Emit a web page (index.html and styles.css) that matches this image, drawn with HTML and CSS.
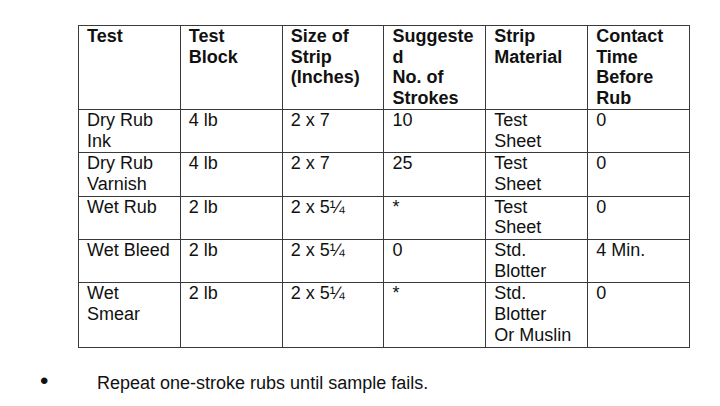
FILE: index.html
```html
<!DOCTYPE html>
<html>
<head>
<meta charset="utf-8">
<link rel="stylesheet" href="styles.css">
</head>
<body>
<div class="page">
<table class="grid">
<thead>
<tr>
<th>Test</th>
<th>Test<br>Block</th>
<th>Size of<br>Strip<br>(Inches)</th>
<th>Suggeste<br>d<br>No. of<br>Strokes</th>
<th>Strip<br>Material</th>
<th>Contact<br>Time<br>Before<br>Rub</th>
</tr>
</thead>
<tbody>
<tr>
<td>Dry Rub<br>Ink</td>
<td>4 lb</td>
<td>2 x 7</td>
<td>10</td>
<td>Test<br>Sheet</td>
<td>0</td>
</tr>
<tr>
<td>Dry Rub<br>Varnish</td>
<td>4 lb</td>
<td>2 x 7</td>
<td>25</td>
<td>Test<br>Sheet</td>
<td>0</td>
</tr>
<tr>
<td>Wet Rub</td>
<td>2 lb</td>
<td>2 x 5¼</td>
<td>*</td>
<td>Test<br>Sheet</td>
<td>0</td>
</tr>
<tr>
<td>Wet Bleed</td>
<td>2 lb</td>
<td>2 x 5¼</td>
<td>0</td>
<td>Std.<br>Blotter</td>
<td>4 Min.</td>
</tr>
<tr>
<td>Wet<br>Smear</td>
<td>2 lb</td>
<td>2 x 5¼</td>
<td>*</td>
<td>Std.<br>Blotter<br>Or Muslin</td>
<td>0</td>
</tr>
</tbody>
</table>
<div class="note">
<span class="dot">•</span>
<span class="note-text">Repeat one-stroke rubs until sample fails.</span>
</div>
</div>
</body>
</html>
```
FILE: styles.css
```css
html, body {
  margin: 0;
  padding: 0;
  background: #ffffff;
}
body {
  font-family: "Liberation Sans", Arial, sans-serif;
  font-size: 18px;
  color: #111111;
}
.page {
  padding: 25px 0 0 78px;
}
.grid {
  border-collapse: collapse;
  table-layout: fixed;
  width: 612px;
}
.grid th,
.grid td {
  border: 1px solid #3a3a3a;
  padding: 0 6px 0 8px;
  vertical-align: top;
  text-align: left;
  line-height: 20.7px;
}
.grid th {
  font-weight: bold;
}
.grid td {
  font-weight: normal;
  padding-bottom: 1px;
}
.note {
  display: flex;
  align-items: baseline;
  margin: 23px 0 0 -38px;
  line-height: 20.7px;
}
.dot {
  width: 57px;
  flex: none;
  font-size: 24px;
}
```
